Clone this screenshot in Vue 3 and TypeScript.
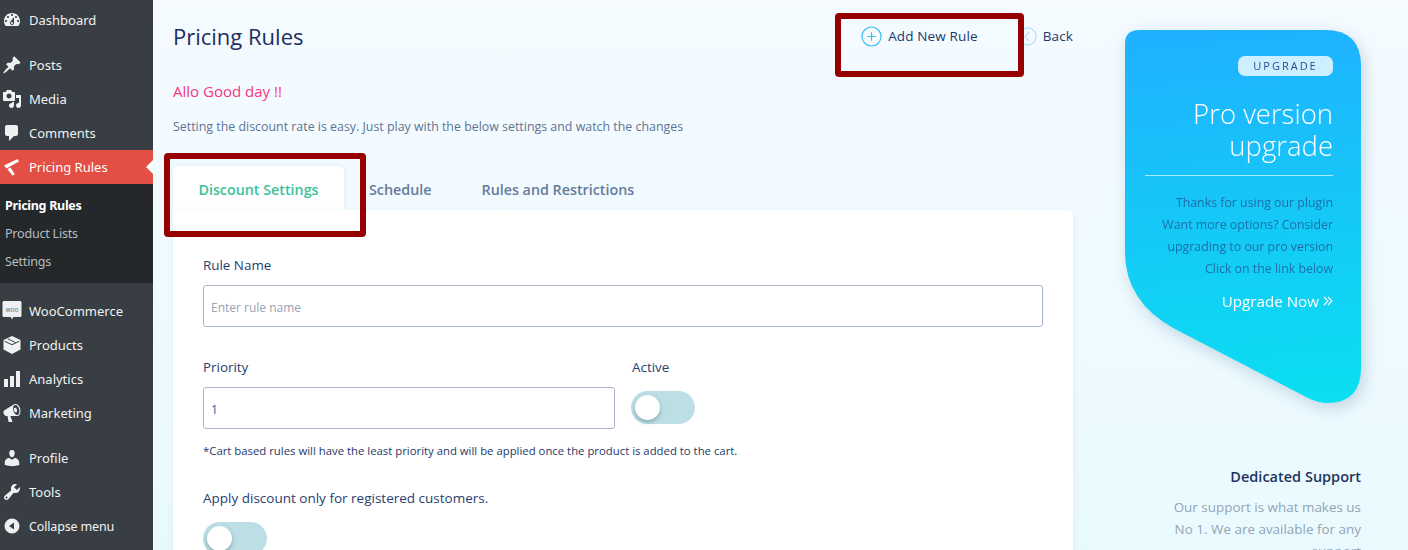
<script setup lang="ts">
interface MenuItem { label: string; path?: string; cls?: string }
const groupA: MenuItem[] = [
  { label: 'Posts', path: 'M10.44 3.02l1.82-1.82 6.36 6.35-1.83 1.82c-1.05-.68-2.48-.57-3.41.36l-.75.75c-.92.93-1.04 2.35-.35 3.41l-1.83 1.82-2.41-2.41-2.8 2.79c-.42.42-3.38 2.71-3.8 2.29s1.86-3.39 2.28-3.81l2.79-2.79L4.1 9.36l1.83-1.82c1.05.69 2.48.57 3.4-.36l.75-.75c.93-.92 1.05-2.35.36-3.41z' },
  { label: 'Media', path: 'M13 11V4c0-.55-.45-1-1-1h-1.67L9 1H5L3.67 3H2c-.55 0-1 .45-1 1v7c0 .55.45 1 1 1h10c.55 0 1-.45 1-1zM7 4.5c1.38 0 2.5 1.12 2.5 2.5S8.38 9.5 7 9.5 4.5 8.38 4.5 7 5.62 4.5 7 4.5zM14 6h5v10.5c0 1.38-1.12 2.5-2.5 2.5S14 17.88 14 16.5s1.12-2.5 2.5-2.5c.17 0 .34.02.5.05V9h-3V6zm-4 8.05V13h2v3.5c0 1.38-1.12 2.5-2.5 2.5S7 17.88 7 16.5 8.12 14 9.5 14c.17 0 .34.02.5.05z' },
  { label: 'Comments', path: 'M5 2h9c1.1 0 2 .9 2 2v7c0 1.1-.9 2-2 2h-2l-5 5v-5H5c-1.1 0-2-.9-2-2V4c0-1.1.9-2 2-2z' },
]
const groupB: MenuItem[] = [
  { label: 'Products', path: 'M10 1l8.500 4v9.500L10 19l-8.500-4.500V5zM2.800 5.800L10 9.300l7.200-3.500v1L10 10.300 2.800 6.800zM6.200 3.500L13.800 7.200l-.9.450L5.300 3.950z' },
  { label: 'Analytics', path: 'M18 18V2h-4v16h4zm-6 0V7H8v11h4zm-6 0v-8H2v8h4z' },
  { label: 'Marketing', path: 'M18.15 5.94c.46 1.62.38 3.22-.02 4.48-.42 1.28-1.26 2.18-2.3 2.48-.16.06-.26.06-.4.06-.06.02-.12.02-.18.02-.06.02-.14.02-.22.02h-6.8l2.22 5.5c.02.14-.06.26-.14.34-.08.1-.24.16-.34.16H6.95c-.1 0-.26-.06-.34-.16-.08-.08-.16-.2-.14-.34l-1-5.5H4.25l-.02-.02c-.5.06-1.08-.18-1.54-.62s-.88-1.08-1.06-1.88c-.24-.8-.2-1.56-.02-2.2.18-.62.58-1.08 1.16-1.3l.02-.02 9-5.4c.1-.06.18-.1.24-.16.06-.04.14-.08.24-.12.16-.08.28-.12.5-.18 1.04-.3 2.24.1 3.22 1 .98.88 1.82 2.24 2.28 3.86zm-2.58 5.98h-.02c.4-.1.74-.34 1.04-.7.58-.7.86-1.76.86-3.04-.02-.64-.1-1.3-.28-1.98-.34-1.36-1.02-2.5-1.78-3.24s-1.68-1.1-2.46-.88c-.82.22-1.4.96-1.7 2-.32 1.04-.28 2.36.06 3.72.38 1.36 1 2.5 1.8 3.24.78.74 1.62 1.1 2.48.88zm-2.54-7.08c.22-.04.42-.02.62.04.38.16.76.48 1.02 1s.42 1.2.42 1.78c0 .3-.04.56-.12.8-.18.48-.44.84-.86.94-.34.1-.8-.06-1.14-.4-.4-.38-.76-.94-1.02-1.62-.08-.24-.14-.5-.16-.76-.1-.88.16-1.6.64-1.74.08-.04.12-.04.2-.04z' },
]
const groupC: MenuItem[] = [
  { label: 'Profile', path: 'M10 9.25c-2.27 0-2.73-3.44-2.73-3.44C7 4.02 7.82 2 9.97 2c2.16 0 2.98 2.02 2.71 3.81 0 0-.41 3.44-2.68 3.44zm0 2.57L12.72 10c2.39 0 4.52 2.33 4.52 4.53v2.49s-3.65 1.13-7.24 1.13c-3.65 0-7.24-1.13-7.24-1.13v-2.49c0-2.25 1.94-4.48 4.47-4.48z' },
  { label: 'Tools', path: 'M16.68 9.77c-1.34 1.34-3.3 1.67-4.95.99l-5.41 6.52c-.99.99-2.59.99-3.58 0s-.99-2.59 0-3.57l6.52-5.42c-.68-1.65-.35-3.61.99-4.95 1.28-1.28 3.12-1.62 4.72-1.06l-2.89 2.89 2.82 2.82 2.86-2.87c.53 1.58.18 3.39-1.08 4.65zM3.81 16.21c.4.39 1.04.39 1.43 0 .4-.4.4-1.04 0-1.43-.39-.4-1.03-.4-1.43 0-.39.39-.39 1.03 0 1.43z' },
  { label: 'Collapse menu', path: 'M10 2.500a7.500 7.500 0 1 0 0 15 7.500 7.500 0 0 0 0-15zm2 4v7L7 10z', cls: 'small' },
]
const subItems = ['Pricing Rules', 'Product Lists', 'Settings']
const dashboardPath = 'M3.76 16h12.48c1.1-1.37 1.76-3.11 1.76-5 0-4.42-3.58-8-8-8s-8 3.58-8 8c0 1.89.66 3.63 1.76 5zM10 4c.55 0 1 .45 1 1s-.45 1-1 1-1-.45-1-1 .45-1 1-1zM6 6c.55 0 1 .45 1 1s-.45 1-1 1-1-.45-1-1 .45-1 1-1zm8 0c.55 0 1 .45 1 1s-.45 1-1 1-1-.45-1-1 .45-1 1-1zm-5.37 5.550L12 7v6c0 1.1-.9 2-2 2s-2-.9-2-2c0-.57.24-1.08.63-1.45zM4 10c.55 0 1 .45 1 1s-.45 1-1 1-1-.45-1-1 .45-1 1-1zm12 0c.55 0 1 .45 1 1s-.45 1-1 1-1-.45-1-1 .45-1 1-1zm-5 3c0-.55-.45-1-1-1s-1 .45-1 1 .45 1 1 1 1-.45 1-1z'
</script>

<template>
  <div class="page">
    <aside class="side">
      <div class="item">
        <svg class="ico" viewBox="0 0 20 20"><path :d="dashboardPath" fill-rule="evenodd" /></svg>
        <span>Dashboard</span>
      </div>
      <div class="group">
        <div v-for="m in groupA" :key="m.label" class="item">
          <svg class="ico" viewBox="0 0 20 20"><path :d="m.path" /></svg>
          <span>{{ m.label }}</span>
        </div>
        <div class="item current">
          <svg class="ico" viewBox="0 0 20 20"><path d="M15.500 2L17 4.500 4.500 11.500 2 8.500zM5.500 12.200L8.300 10.600 12.800 17l-2.200 1.800z" /></svg>
          <span>Pricing Rules</span>
          <i class="arrow"></i>
        </div>
        <div class="sub">
          <div v-for="(s, i) in subItems" :key="s" class="sub-item" :class="{ on: i === 0 }">{{ s }}</div>
        </div>
      </div>
      <div class="group">
        <div class="item">
          <svg class="ico woo" viewBox="0 0 20 20">
            <path d="M2 0h16c1 0 1.500.6 1.500 1.500v13c0 1-.6 1.500-1.500 1.500h-6.500l-1.800 2.500-.8-2.500H2c-1 0-1.500-.6-1.500-1.500v-13C.5.6 1 0 2 0z" />
            <text x="10" y="10.500" text-anchor="middle" class="woo-t">woo</text>
          </svg>
          <span>WooCommerce</span>
        </div>
        <div v-for="m in groupB" :key="m.label" class="item">
          <svg class="ico" viewBox="0 0 20 20"><path :d="m.path" fill-rule="evenodd" /></svg>
          <span>{{ m.label }}</span>
        </div>
      </div>
      <div class="group">
        <div v-for="m in groupC" :key="m.label" class="item" :class="m.cls">
          <svg class="ico" viewBox="0 0 20 20"><path :d="m.path" fill-rule="evenodd" /></svg>
          <span>{{ m.label }}</span>
        </div>
      </div>
    </aside>

    <main class="main">
      <header class="head">
        <h1>Pricing Rules</h1>
        <nav class="actions">
          <a class="act">
            <svg class="circ" viewBox="0 0 22 22"><circle cx="11" cy="11" r="10" /><path d="M11 6.500v9M6.500 11h9" /></svg>
            <span>Add New Rule</span>
          </a>
          <a class="act">
            <svg class="circ faint" viewBox="0 0 22 22"><circle cx="11" cy="11" r="10" /><path d="M13 6l-5 5 5 5" /></svg>
            <span>Back</span>
          </a>
        </nav>
      </header>
      <p class="hello">Allo Good day !!</p>
      <p class="desc">Setting the discount rate is easy. Just play with the below settings and watch the changes</p>

      <div class="tabs">
        <div class="tab active">Discount Settings</div>
        <div class="tab t2">Schedule</div>
        <div class="tab t3">Rules and Restrictions</div>
      </div>

      <section class="card">
        <label class="lbl">Rule Name</label>
        <input class="inp" type="text" placeholder="Enter rule name" />
        <div class="row">
          <div class="col-a">
            <label class="lbl">Priority</label>
            <input class="inp" type="text" value="1" />
          </div>
          <div class="col-b">
            <label class="lbl">Active</label>
            <div class="toggle"><i></i></div>
          </div>
        </div>
        <p class="note">*Cart based rules will have the least priority and will be applied once the product is added to the cart.</p>
        <label class="lbl apply">Apply discount only for registered customers.</label>
        <div class="toggle"><i></i></div>
      </section>
    </main>

    <aside class="right">
      <div class="promo-wrap">
        <div class="promo">
          <span class="pill">UPGRADE</span>
          <h2>Pro version<br />upgrade</h2>
          <div class="rule"></div>
          <p class="promo-text">Thanks for using our plugin<br />Want more options? Consider<br />upgrading to our pro version<br />Click on the link below</p>
          <a class="now">Upgrade Now <svg viewBox="0 0 10 10"><path d="M1 1L5 5 1 9M5 1L9 5 5 9" /></svg></a>
        </div>
      </div>
      <h3>Dedicated Support</h3>
      <p class="support">Our support is what makes us<br />No 1. We are available for any<br />support</p>
    </aside>

    <div class="mark mark-add"></div>
    <div class="mark mark-tab"></div>
  </div>
</template>

<style>
html, body { margin: 0; overflow: hidden; }
</style>

<style scoped>
.page {
  position: relative;
  display: flex;
  width: 1408px;
  height: 550px;
  overflow: hidden;
  background: linear-gradient(180deg, #f5fbff 0%, #e9faff 100%);
  font-family: "Open Sans", "Noto Sans", sans-serif;
  color: #1d3461;
}
.side {
  flex: 0 0 153px;
  padding-top: 3px;
  background: #383e43;
  font-family: "Noto Sans", sans-serif;
  font-size: 13px;
  color: #f0f2f3;
}
.group { margin-top: 11px; }
.item {
  position: relative;
  display: flex;
  align-items: center;
  height: 34px;
}
.ico {
  flex: 0 0 20px;
  width: 20px;
  height: 20px;
  margin: 0 7px 0 2px;
  fill: #eef0f1;
}
.woo-t { font: 400 6.500px "Noto Sans", sans-serif; fill: #6b7075; }
.small { font-size: 12.500px; letter-spacing: -0.15px; }
.current { background: #e34e45; color: #fff; }
.current .ico { fill: #fff; }
.arrow {
  position: absolute;
  right: 0;
  top: 10px;
  border: 7px solid transparent;
  border-left-width: 0;
  border-right-color: #f5fbff;
}
.sub {
  height: 99px;
  padding-top: 8px;
  box-sizing: border-box;
  background: #24282b;
}
.sub-item {
  height: 28px;
  line-height: 28px;
  padding-left: 5px;
  font-size: 12.500px;
  color: #b8bcbf;
  letter-spacing: -0.2px;
}
.sub-item.on { color: #fff; font-weight: 700; letter-spacing: -0.3px; }
.main {
  flex: 0 0 900px;
  margin-left: 20px;
}
.head {
  display: flex;
  justify-content: space-between;
  height: 74px;
  padding-top: 20px;
  box-sizing: border-box;
}
h1 {
  margin: 0;
  font-size: 22px;
  font-weight: 400;
  line-height: 32px;
  color: #1d2f5e;
}
.actions { display: flex; gap: 40px; margin-top: 1px; }
.act {
  display: flex;
  align-items: center;
  gap: 6px;
  height: 30px;
  font-size: 13.500px;
  letter-spacing: 0.01em;
  color: #22386b;
}
.circ {
  width: 21px;
  height: 21px;
  fill: none;
  stroke: #3bb8f5;
  stroke-width: 1.200;
}
.circ.faint { stroke: #a6def9; width: 19px; height: 19px; }
.hello {
  margin: 7px 0 0;
  line-height: 20px;
  font-size: 15px;
  font-weight: 500;
  color: #f4377f;
}
.desc {
  margin: 16px 0 0;
  line-height: 20px;
  font-size: 12.400px;
  color: #5f7391;
}
.tabs {
  display: flex;
  height: 44px;
  margin-top: 29px;
  font-size: 14.300px;
  font-weight: 600;
  color: #667a9c;
}
.tab { line-height: 47px; }
.active {
  width: 171px;
  height: 44px;
  text-align: center;
  background: #fff;
  color: #3cc29a;
  border-radius: 5px 5px 0 0;
  box-shadow: 0 0 4px rgba(120, 160, 190, 0.2);
}
.t2 { margin-left: 25px; }
.t3 { margin-left: 50px; }
.card {
  position: relative;
  height: 400px;
  padding: 45px 30px 0;
  box-sizing: border-box;
  background: #fff;
  border-radius: 0 5px 5px 5px;
  box-shadow: 0 2px 8px rgba(120, 160, 190, 0.12);
}
.lbl {
  display: block;
  height: 20px;
  line-height: 20px;
  font-size: 13.400px;
  color: #27406e;
}
.inp {
  display: block;
  width: 100%;
  height: 42px;
  margin-top: 10px;
  padding: 2px 7px 0;
  box-sizing: border-box;
  border: 1px solid #a9b6c8;
  border-radius: 3px;
  outline: none;
  background: #fff;
  font: 12px "Open Sans", sans-serif;
  color: #1c5e9a;
}
.inp::placeholder { color: #97a3b2; }
.row { display: flex; margin-top: 30px; }
.col-a { flex: 0 0 412px; }
.col-b { margin-left: 16px; }
.col-b .lbl { margin-left: 1px; }
.toggle {
  position: relative;
  width: 64px;
  height: 33px;
  border-radius: 17px;
  background: #bcdfe6;
}
.toggle i {
  position: absolute;
  left: 4px;
  top: 4px;
  width: 25px;
  height: 25px;
  border-radius: 50%;
  background: #fff;
  box-shadow: 0 2px 4px rgba(60, 80, 90, 0.4);
}
.col-b .toggle { margin-top: 14px; }
.note {
  margin: 12px 0 0;
  line-height: 20px;
  font-size: 11.350px;
  color: #25396a;
}
.apply { margin-top: 27px; font-size: 13.500px; }
.apply + .toggle { margin-top: 14px; }
.right {
  flex: 0 0 236px;
  margin-left: 52px;
  padding-top: 30px;
}
.promo-wrap { filter: drop-shadow(3px 5px 8px rgba(80, 120, 150, 0.28)); }
.promo {
  height: 374px;
  width: 236px;
  padding: 26px 28px 0 20px;
  box-sizing: border-box;
  display: flex;
  flex-direction: column;
  align-items: flex-end;
  background: linear-gradient(174deg, #20b0ff 0%, #0ae0f0 100%);
  clip-path: path("M14 0H200Q236 0 236 36V338Q236 374 200 373Q192 372 185 369L50 299Q0 272 0 222V14Q0 0 14 0Z");
}
.pill {
  width: 95px;
  height: 20px;
  line-height: 20px;
  text-align: center;
  border-radius: 7px;
  background: #cdefff;
  font-size: 11px;
  letter-spacing: 2px;
  color: #28508a;
}
h2 {
  margin: 22px 0 0;
  font-size: 27.500px;
  font-weight: 300;
  line-height: 32px;
  text-align: right;
  color: #fff;
}
.rule {
  align-self: stretch;
  height: 1px;
  margin-top: 13px;
  background: rgba(255, 255, 255, 0.65);
}
.promo-text {
  margin: 16px 0 0;
  line-height: 22px;
  font-size: 12.350px;
  text-align: right;
  color: #1b6fa8;
}
.now {
  display: flex;
  align-items: center;
  gap: 4px;
  margin-top: 10px;
  line-height: 22px;
  font-size: 15.200px;
  color: #fff;
}
.now svg {
  width: 10px;
  height: 10px;
  fill: none;
  stroke: #fff;
  stroke-width: 1.100;
}
h3 {
  margin: 62px 0 0;
  line-height: 22px;
  font-size: 14.500px;
  font-weight: 600;
  text-align: right;
  color: #1f3560;
}
.support {
  margin: 8px 0 0;
  line-height: 22px;
  font-size: 13.450px;
  text-align: right;
  color: #93a4b5;
}
.mark {
  position: absolute;
  box-sizing: border-box;
  border: 6px solid #960000;
  border-radius: 4px;
}
.mark-add { left: 835px; top: 13px; width: 189px; height: 64px; }
.mark-tab { left: 164px; top: 153px; width: 202px; height: 84px; }
</style>
